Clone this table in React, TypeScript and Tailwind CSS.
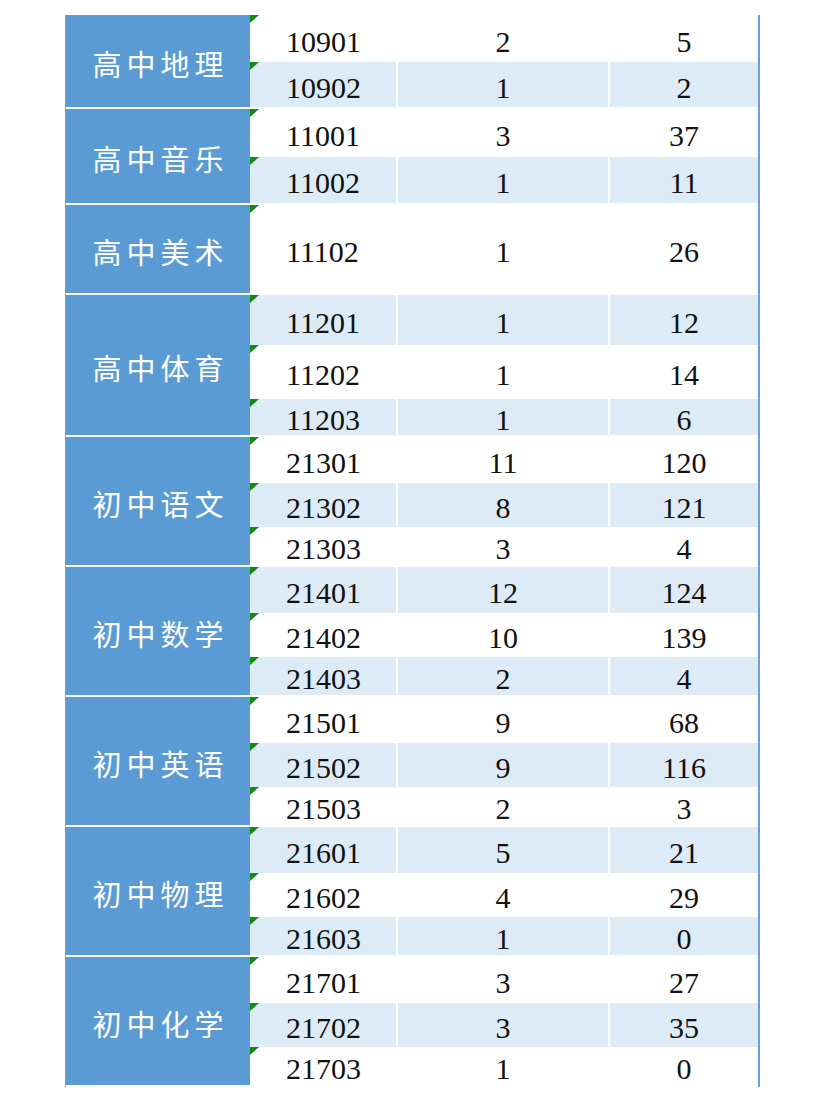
type Row = { code: string; count: string; total: string; h: string };
type Group = { subject: string; rows: Row[] };

const three = ["h-[46px]", "h-[44px]", "h-[38px]"];

const groups: Group[] = [
  {
    subject: "高中地理",
    rows: [
      { code: "10901", count: "2", total: "5", h: "h-[47px]" },
      { code: "10902", count: "1", total: "2", h: "h-[45px]" },
    ],
  },
  {
    subject: "高中音乐",
    rows: [
      { code: "11001", count: "3", total: "37", h: "h-[48px]" },
      { code: "11002", count: "1", total: "11", h: "h-[46px]" },
    ],
  },
  {
    subject: "高中美术",
    rows: [{ code: "11102", count: "1", total: "26", h: "h-[88px]" }],
  },
  {
    subject: "高中体育",
    rows: [
      { code: "11201", count: "1", total: "12", h: "h-[50px]" },
      { code: "11202", count: "1", total: "14", h: "h-[54px]" },
      { code: "11203", count: "1", total: "6", h: "h-[36px]" },
    ],
  },
  {
    subject: "初中语文",
    rows: [
      { code: "21301", count: "11", total: "120", h: three[0] },
      { code: "21302", count: "8", total: "121", h: three[1] },
      { code: "21303", count: "3", total: "4", h: three[2] },
    ],
  },
  {
    subject: "初中数学",
    rows: [
      { code: "21401", count: "12", total: "124", h: three[0] },
      { code: "21402", count: "10", total: "139", h: three[1] },
      { code: "21403", count: "2", total: "4", h: three[2] },
    ],
  },
  {
    subject: "初中英语",
    rows: [
      { code: "21501", count: "9", total: "68", h: three[0] },
      { code: "21502", count: "9", total: "116", h: three[1] },
      { code: "21503", count: "2", total: "3", h: three[2] },
    ],
  },
  {
    subject: "初中物理",
    rows: [
      { code: "21601", count: "5", total: "21", h: three[0] },
      { code: "21602", count: "4", total: "29", h: three[1] },
      { code: "21603", count: "1", total: "0", h: three[2] },
    ],
  },
  {
    subject: "初中化学",
    rows: [
      { code: "21701", count: "3", total: "27", h: three[0] },
      { code: "21702", count: "3", total: "35", h: three[1] },
      { code: "21703", count: "1", total: "0", h: three[2] },
    ],
  },
];

// digits in the sheet are a Times-like serif
const num = "[font-family:Liberation_Serif,Times_New_Roman,serif] text-[30px] leading-none text-[#111] pt-[6px]";

const App = () => {
  let idx = 0;

  return (
    <div className="min-h-screen bg-white pt-[15px] pl-[65px]">
      <div className="flex w-fit">
        <div className="w-px bg-[#6a9fd4]" />
        <div className="flex flex-col gap-[2px] pb-[2px]">
          {groups.map((g) => (
            <div key={g.subject} className="flex">
              <div className="w-[184px] bg-[#5b9bd5] flex items-center justify-center pt-[5px]">
                <span className="pl-[5px] tracking-[5px] text-[29px] leading-none text-white [font-family:Noto_Sans_CJK_SC,sans-serif]">
                  {g.subject}
                </span>
              </div>
              <div className="flex flex-col">
                {g.rows.map((r) => {
                  const striped = idx++ % 2 === 1;
                  const bg = striped ? "bg-[#ddebf7]" : "bg-white";
                  return (
                    <div key={r.code} className={`flex gap-[2px] bg-white ${r.h}`}>
                      <div className={`relative w-[146px] flex items-center pl-[36px] ${bg} ${num}`}>
                        <span className="absolute left-0 top-0 w-0 h-0 border-t-[8px] border-t-[#138a13] border-r-[9px] border-r-transparent" />
                        {r.code}
                      </div>
                      <div className={`w-[210px] flex items-center justify-center ${bg} ${num}`}>{r.count}</div>
                      <div className={`w-[148px] flex items-center justify-center ${bg} ${num}`}>{r.total}</div>
                    </div>
                  );
                })}
              </div>
            </div>
          ))}
        </div>
        <div className="w-[2px] bg-[#6a9fd4]" />
      </div>
    </div>
  );
};

export default App;
